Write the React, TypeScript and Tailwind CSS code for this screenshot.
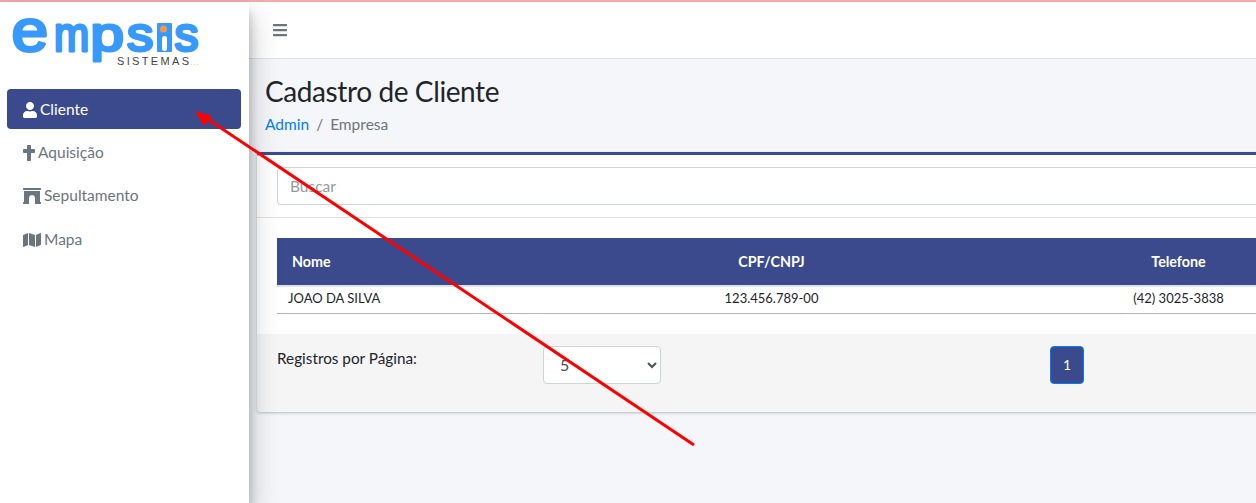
import { FaArchway, FaBars, FaCross, FaMap, FaUser } from "react-icons/fa";

const navy = "bg-[#3b4a8c]";

function Logo() {
    const letter = "fill-[#3899fd] stroke-[#3899fd] [stroke-linejoin:round] [font-family:'Liberation_Sans',sans-serif]";
    return (
        <svg width="210" height="70" viewBox="0 0 210 70" className="block">
            <text transform="translate(11.5 48.5) scale(1.1 1)" fontSize="60" strokeWidth="3" className={letter}>e</text>
            <text transform="translate(54 49) scale(0.88 1)" fontSize="48" strokeWidth="3" className={letter}>m</text>
            <text transform="translate(90.5 49) scale(1.25 1)" fontSize="48" strokeWidth="3" className={letter}>p</text>
            <text transform="translate(127 49) scale(1.1 1)" fontSize="48" strokeWidth="3" className={letter}>s</text>
            <rect x="157" y="21" width="15" height="29" rx="1" fill="#3899fd" />
            <rect x="162" y="34" width="5" height="15" rx="2.5" fill="#fff" />
            <circle cx="163.5" cy="27" r="3.5" fill="#f39a3c" />
            <text transform="translate(174.5 49)" fontSize="48" strokeWidth="3" className={letter}>s</text>
            <text x="117" y="63" fontSize="11" textLength="72" className="fill-[#444] [font-family:'Liberation_Sans',sans-serif]">SISTEMAS</text>
            <text x="190" y="63" fontSize="9" textLength="9" className="fill-[#f7c48c] [font-family:'Liberation_Sans',sans-serif]">...</text>
        </svg>
    );
}

function NavItem({ icon, label, active }: { icon: React.ReactNode; label: string; active?: boolean }) {
    return (
        <a
            className={`flex h-10 items-center gap-[3px] rounded pl-4 text-[15.5px] ${active ? `${navy} pt-[1px] text-white` : "text-[#6c757d]"}`}
        >
            {icon}
            {label}
        </a>
    );
}

export default function App() {
    return (
        <div className="relative flex h-[503px] flex-col overflow-hidden bg-[#f4f6f9] text-[#212529] [font-family:Lato,'Noto_Sans',sans-serif]">
            <div className="h-[2px] shrink-0 bg-[#f7a8aa]" />
            <div className="flex min-h-0 flex-1">
                <aside className="relative z-10 w-[249px] shrink-0 bg-white shadow-[0_14px_28px_rgba(0,0,0,0.25),0_10px_10px_rgba(0,0,0,0.22)]">
                    <div className="h-[87px]">
                        <Logo />
                    </div>
                    <nav className="flex flex-col gap-[3.5px] pl-[7px] pr-2">
                        <NavItem active icon={<FaUser className="h-4 w-[14px]" />} label="Cliente" />
                        <NavItem icon={<FaCross className="h-4 w-3" />} label="Aquisição" />
                        <NavItem icon={<FaArchway className="h-4 w-[18px]" />} label="Sepultamento" />
                        <NavItem icon={<FaMap className="h-4 w-[18px]" />} label="Mapa" />
                    </nav>
                </aside>

                <main className="min-w-0 flex-1 overflow-hidden">
                    <header className="flex h-[57px] items-center border-b border-[#dee2e6] bg-white pl-6 text-[#6c757d]">
                        <FaBars className="h-4 w-[14px]" />
                    </header>

                    <div className="h-[93px] pl-4 pt-[14px]">
                        <h1 className="text-[28px] leading-[36px] font-normal tracking-[-0.4px]">Cadastro de Cliente</h1>
                        <div className="mt-[3px] flex gap-[7px] text-[15.5px] leading-6 text-[#6c757d]">
                            <span className="text-[#007bff]">Admin</span>
                            <span>/</span>
                            <span>Empresa</span>
                        </div>
                    </div>

                    <section className="ml-2 w-[1300px] rounded border-t-[3px] border-[#3b4a8c] bg-white shadow-[0_1px_3px_rgba(0,0,0,0.25)]">
                        <div className="border-b border-[#dee2e6] px-5 py-3">
                            <input
                                placeholder="Buscar"
                                className="block h-[38px] w-full rounded border border-[#ced4da] px-3 pb-[1px] text-[15.5px] placeholder:text-[#939ba2]"
                            />
                        </div>

                        <div className="p-5">
                            <table className="w-[1105px] table-fixed border-collapse">
                                <thead>
                                    <tr className={`${navy} h-[48px] border-b-2 border-[#dee2e6] text-[14.3px] text-white`}>
                                        <th className="w-[291px] pl-[15px] text-left font-bold">Nome</th>
                                        <th className="w-[407px] font-bold">CPF/CNPJ</th>
                                        <th className="w-[407px] font-bold">Telefone</th>
                                    </tr>
                                </thead>
                                <tbody>
                                    <tr className="h-[27px] border-b border-[#b5b5b5] text-[13px]">
                                        <td className="pb-[2px] pl-[11px]">JOAO DA SILVA</td>
                                        <td className="pb-[2px] text-center">123.456.789-00</td>
                                        <td className="pb-[2px] text-center">(42) 3025-3838</td>
                                    </tr>
                                </tbody>
                            </table>
                        </div>

                        <footer className="flex h-[78px] items-start rounded-b bg-[#f5f5f5] px-5 pt-3">
                            <label className="w-[266px] text-[15.3px] leading-6">Registros por Página:</label>
                            <select className="h-[38px] w-[118px] rounded border border-[#ced4da] bg-white pl-3 text-base text-[#495057]">
                                <option>5</option>
                            </select>
                            <button className={`ml-[389px] h-[38px] w-[34px] rounded border border-[#007bff] ${navy} text-sm text-white`}>
                                1
                            </button>
                        </footer>
                    </section>
                </main>
            </div>

            <svg className="pointer-events-none absolute inset-0 z-20" width="1256" height="503" viewBox="0 0 1256 503">
                <line x1="694" y1="445" x2="206" y2="118" stroke="#f00" strokeWidth="3" />
                <polygon points="195,111 212,116 204,126" fill="#f00" />
            </svg>
        </div>
    );
}
